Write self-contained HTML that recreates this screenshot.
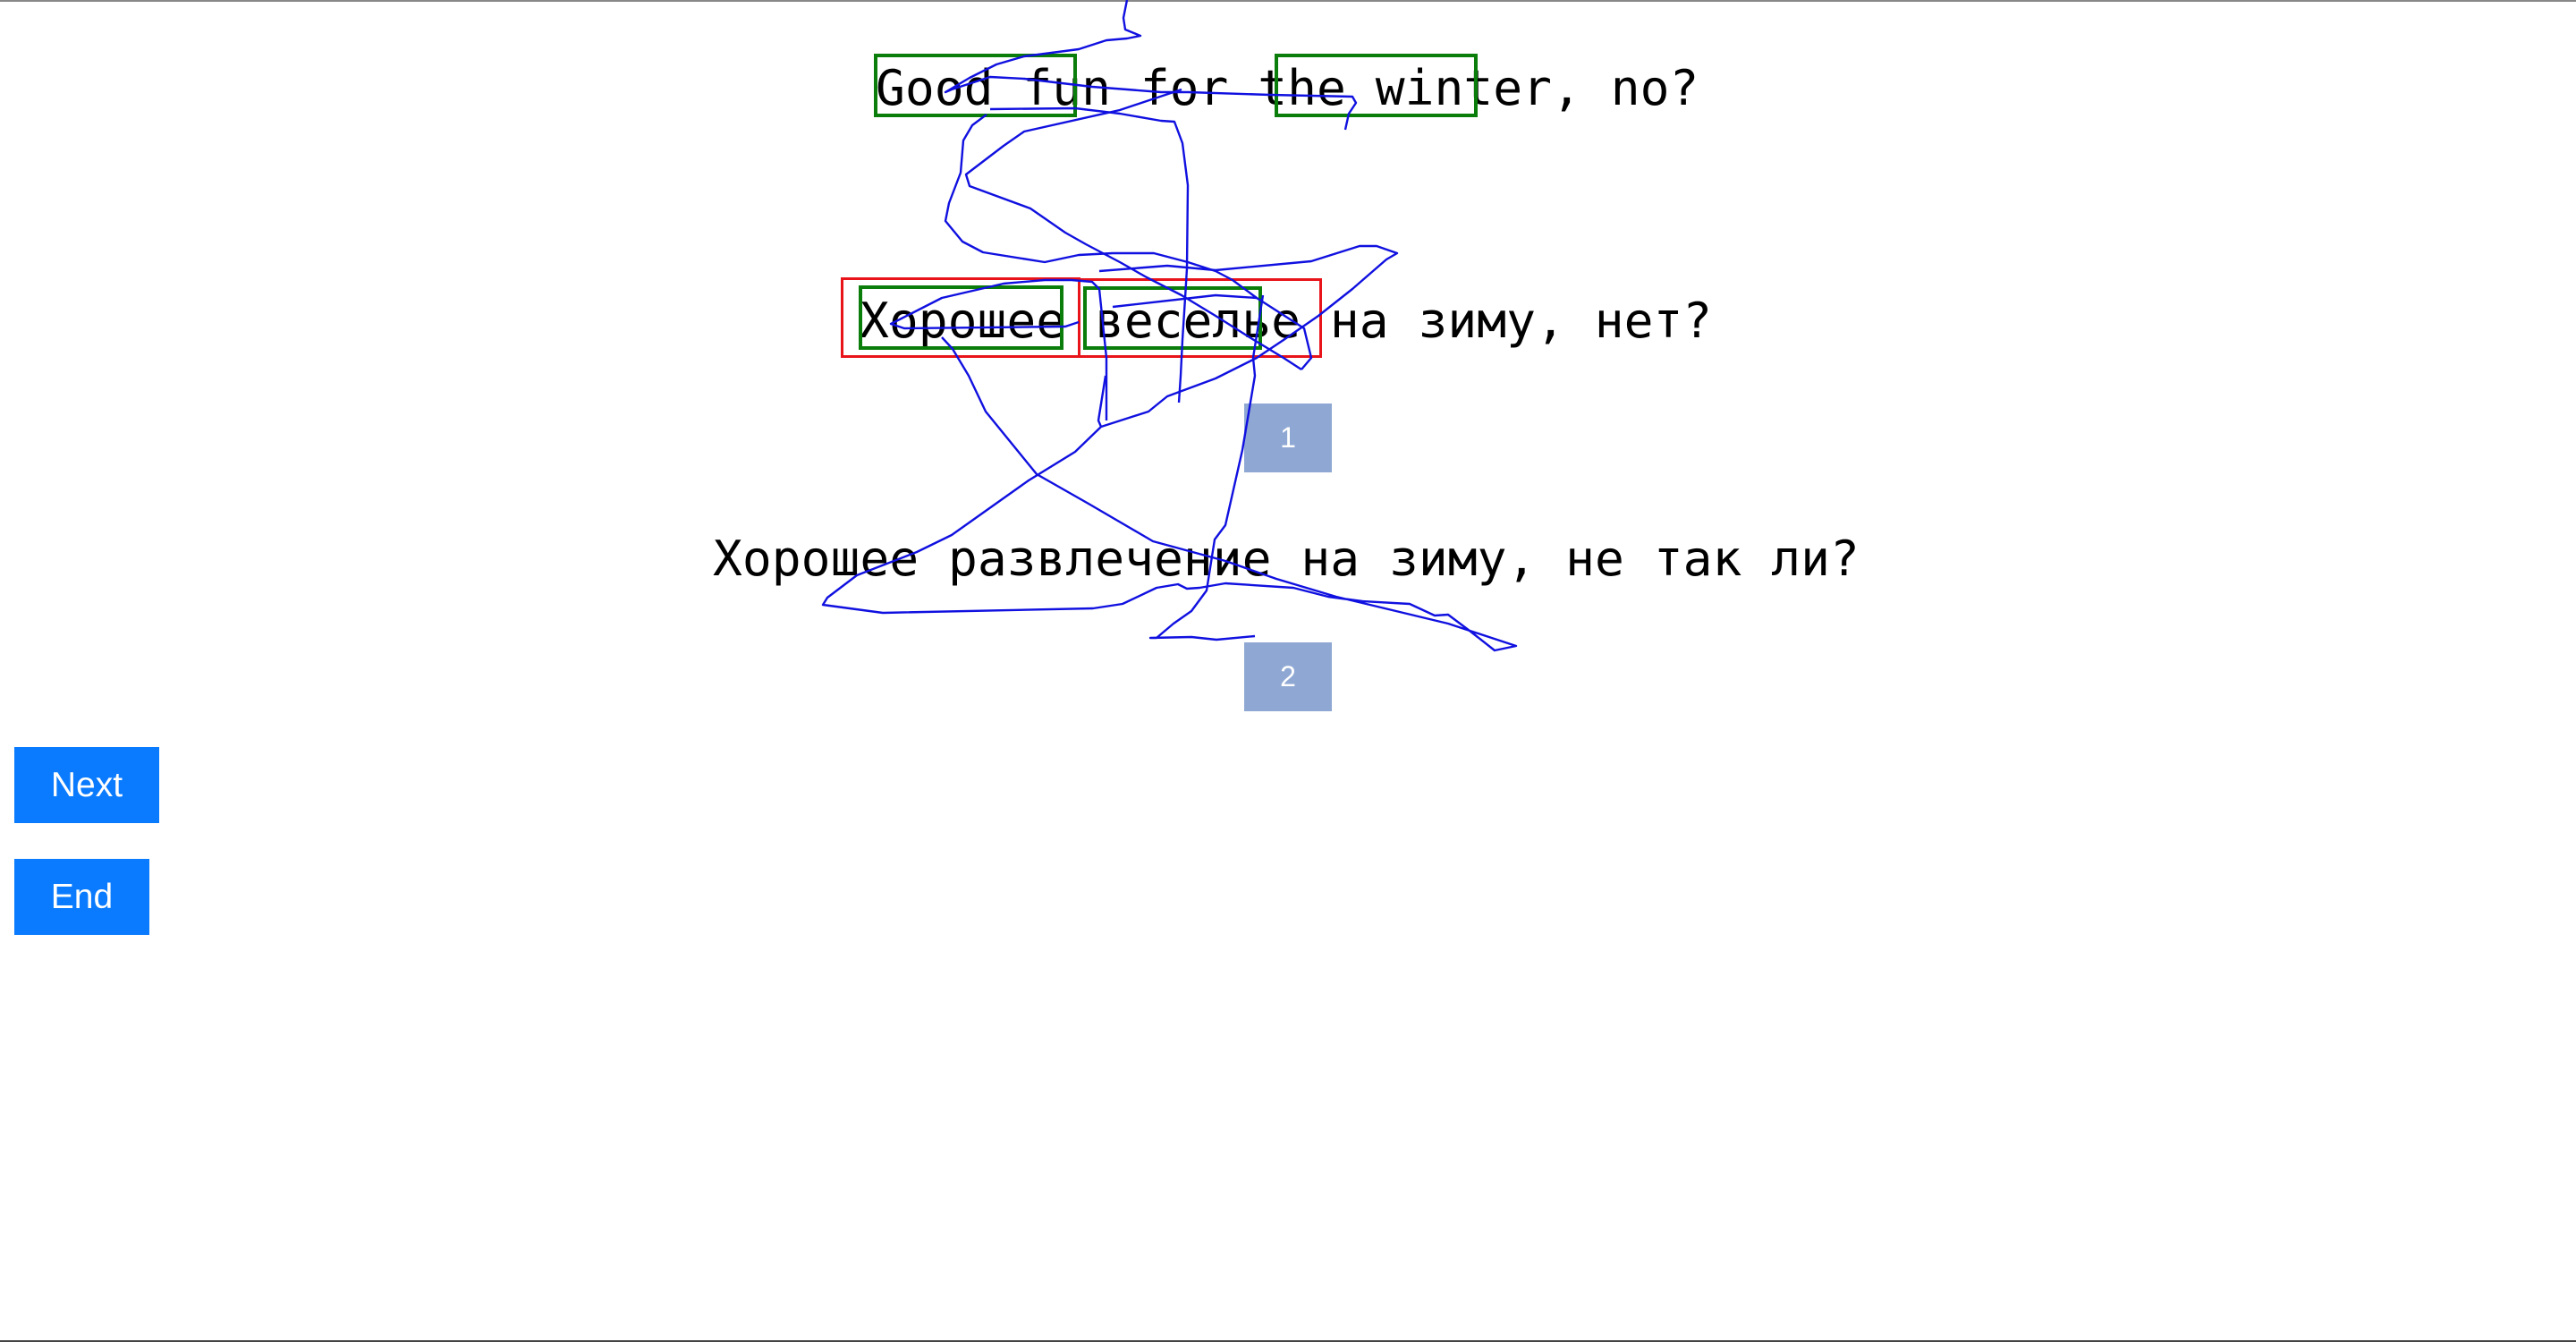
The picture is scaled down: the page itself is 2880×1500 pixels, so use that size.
<!DOCTYPE html>
<html><head><meta charset="utf-8"><style>
html,body{margin:0;padding:0;background:#fff;width:2880px;height:1500px;overflow:hidden;position:relative}
.t{position:absolute;font-family:"DejaVu Sans Mono","Liberation Mono",monospace;font-size:54.6px;line-height:60px;white-space:pre;color:#000}
.b{position:absolute;box-sizing:border-box}
.g{border:4px solid #0a7d0a}
.r{border:3px solid #e8141a}
.lab{position:absolute;background:#8fa8d3;color:#fff;font-family:"Liberation Sans",Arial,sans-serif;font-size:32px;display:flex;align-items:center;justify-content:center}
.btn{position:absolute;background:#0a7bff;color:#fff;font-family:"Liberation Sans",Arial,sans-serif;font-size:39px;display:flex;align-items:center;justify-content:center}
</style></head><body>
<div style="position:absolute;left:0;top:0;width:2880px;height:2px;background:#888"></div>
<div style="position:absolute;left:0;top:1498px;width:2880px;height:2px;background:#444"></div>

<div class="t" style="left:979px;top:68px">Good fun for the winter, no?</div>
<div class="t" style="left:961px;top:328px">Хорошее веселье на зиму, нет?</div>
<div class="t" style="left:797px;top:594px">Хорошее развлечение на зиму, не так ли?</div>

<div class="b g" style="left:977px;top:60px;width:227px;height:71px"></div>
<div class="b g" style="left:1425px;top:60px;width:227px;height:71px"></div>
<div class="b r" style="left:940px;top:310px;width:268px;height:90px"></div>
<div class="b r" style="left:1205px;top:311px;width:273px;height:89px"></div>
<div class="b g" style="left:960px;top:319px;width:229px;height:72px"></div>
<div class="b g" style="left:1211px;top:320px;width:200px;height:71px"></div>

<div class="lab" style="left:1391px;top:451px;width:98px;height:77px">1</div>
<div class="lab" style="left:1391px;top:718px;width:98px;height:77px">2</div>

<div class="btn" style="left:16px;top:835px;width:162px;height:85px">Next</div>
<div class="btn" style="left:16px;top:960px;width:151px;height:85px">End</div>

<svg style="position:absolute;left:0;top:0" width="2880" height="1500" viewBox="0 0 2880 1500">
<g fill="none" stroke="#1010e0" stroke-width="2.4" stroke-linejoin="round">
<polyline points="1260,0 1256,20 1258,33 1275,40 1260,43 1237,45 1206,55 1145,63 1114,72 1084,87 1057,103 1064,100 1107,86 1145,88 1221,97 1260,100 1298,103 1328,103 1420,106 1512,108 1516,115 1508,127 1504,145"/>
<polyline points="1107,122 1202,121 1252,127 1298,135 1313,136 1322,160 1328,207 1327,300 1325,333 1322,380 1320,420 1318,450"/>
<polyline points="1103,128 1087,140 1077,157 1074,193 1061,227 1057,247 1076,270 1099,282 1168,293 1206,285 1244,283 1290,283 1328,293 1359,303 1378,313 1405,333 1458,367 1466,400 1455,413"/>
<polyline points="1321,100 1252,123 1145,147 1122,163 1080,195 1084,208 1152,233 1191,260 1214,273 1252,293 1282,310 1321,330 1359,353 1397,377 1435,400 1455,413"/>
<polyline points="1229,303 1305,297 1359,302 1466,292 1520,275 1539,275 1562,283 1550,290 1512,323 1474,353 1435,380 1405,400 1359,423 1305,443 1284,460 1231,477 1202,505 1150,537 1064,598 1025,617 958,643 925,668 920,676 987,685 1222,680 1255,675 1293,657 1317,653 1327,658 1341,657 1370,652 1446,657 1485,667 1523,672 1576,675 1604,688 1619,687 1643,705 1671,727 1695,722 1619,697 1494,667 1427,647 1370,627 1289,605 1217,563 1159,530 1102,460 1083,420 1065,390 1053,377"/>
<polyline points="1237,470 1237,400 1229,323 1221,315 1198,313 1168,313 1122,317 1053,333 1000,360 996,362 1011,367 1191,365 1206,360"/>
<polyline points="1244,343 1359,330 1405,333"/>
<polyline points="1236,420 1228,470 1231,477"/>
<polyline points="1412,330 1401,400 1403,420 1389,503 1370,587 1358,603 1349,660 1332,683 1312,697 1293,713 1286,713 1332,712 1360,715 1403,711"/>
</g>
</svg>
</body></html>
